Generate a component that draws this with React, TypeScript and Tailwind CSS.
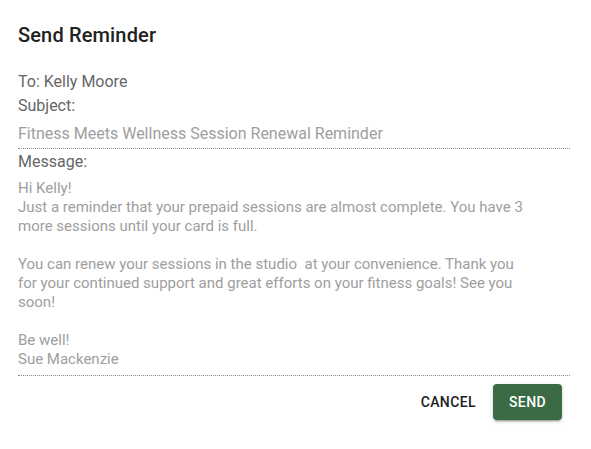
export default function App() {
  const font = { fontFamily: 'Roboto, "Liberation Sans", sans-serif' };
  return (
    <div className="w-[591px] h-[449px] bg-white" style={font}>
      <div className="px-[18px] pt-[19px]">
        <h2 className="text-[20px] leading-[32px] font-medium text-[#212121] tracking-[0.15px]">Send Reminder</h2>
        <div className="mt-[19px] text-[16px] leading-[24px] text-[#666]">To: Kelly Moore</div>
        <div className="text-[16px] leading-[24px] text-[#666]">Subject:</div>
        <div className="mt-[4px] pb-[2px] w-[552px] border-b border-dotted border-[#888] text-[16px] leading-[24px] text-[#9e9e9e]">
          Fitness Meets Wellness Session Renewal Reminder
        </div>
        <div className="mt-[1px] text-[16px] leading-[24px] text-[#666]">Message:</div>
        <div className="mt-[5px] pb-[6px] w-[552px] border-b border-dotted border-[#888]">
          <div className="w-[510px] text-[15px] leading-[19px] text-[#9e9e9e] whitespace-pre-wrap">
            {"Hi Kelly!\nJust a reminder that your prepaid sessions are almost complete. You have 3 more sessions until your card is full.\n\nYou can renew your sessions in the studio  at your convenience. Thank you for your continued support and great efforts on your fitness goals! See you soon!\n\nBe well!\nSue Mackenzie"}
          </div>
        </div>
        <div className="mt-[8px] w-[552px] flex justify-end items-center gap-[17px] pr-[8px]">
          <button className="text-[14px] font-medium tracking-[0.4px] text-[#212121] uppercase">Cancel</button>
          <button className="w-[69px] h-[36px] rounded-[4px] bg-[#3a6b45] text-white text-[14px] font-medium tracking-[0.4px] uppercase shadow-[0_3px_1px_-2px_rgba(0,0,0,0.2),0_2px_2px_0_rgba(0,0,0,0.14),0_1px_5px_0_rgba(0,0,0,0.12)]">Send</button>
        </div>
      </div>
    </div>
  );
}
